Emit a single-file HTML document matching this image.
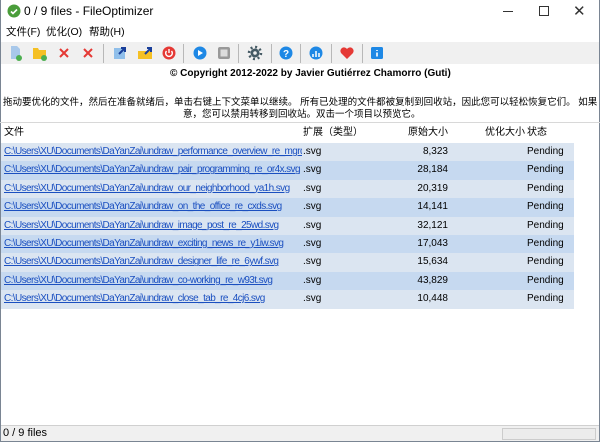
<!DOCTYPE html>
<html><head><meta charset="utf-8"><style>
*{margin:0;padding:0;box-sizing:border-box}
body{width:600px;height:442px;overflow:hidden;background:#fff;font-family:"Liberation Sans","Noto Sans CJK SC",sans-serif;font-size:11px;color:#000;position:relative}
.win{position:absolute;inset:0;border:1px solid #7a8593;border-top:none}
.abs{position:absolute;white-space:nowrap}
.tb{position:absolute;left:1px;right:1px;top:42px;height:22px;background:#f0f0f0}
.sep{position:absolute;top:44px;width:1px;height:19px;background:#b8b8b8}
.row{position:absolute;left:1px;width:573px;height:18.4px;font-size:10px;line-height:18px}
.row span{position:absolute;white-space:nowrap}
.a{left:3px;color:#1a4fc0;text-decoration:underline;letter-spacing:-0.6px;width:298px;overflow:hidden}
.e{left:302px}.o{right:126px}.s{left:526px}
.p{position:absolute;left:3px;width:594px;font-size:9.5px;white-space:nowrap;overflow:hidden;text-align:justify;text-align-last:justify}
</style></head><body>
<div class="win"></div>
<svg class="abs" style="left:7px;top:4px" width="14" height="14"><circle cx="7" cy="7" r="6.5" fill="#4a9d3a"/><path d="M4 7.5l2 2 4-4" stroke="#fff" stroke-width="1.6" fill="none"/></svg>
<div class="abs" style="left:24px;top:4px;font-size:12px">0 / 9 files - FileOptimizer</div>
<div class="abs" style="left:503px;top:11px;width:10px;height:1px;background:#333"></div>
<div class="abs" style="left:539px;top:6px;width:10px;height:10px;border:1px solid #333"></div>
<div class="abs" style="left:573px;top:2px;font-size:15px;color:#333">✕</div>
<div class="abs" style="left:6px;top:24px;font-size:10.5px">文件(F)</div>
<div class="abs" style="left:46px;top:24px;font-size:10.5px">优化(O)</div>
<div class="abs" style="left:89px;top:24px;font-size:10.5px">帮助(H)</div>
<div class="tb"></div>
<div class="sep" style="left:103px"></div><div class="sep" style="left:183px"></div><div class="sep" style="left:238px"></div><div class="sep" style="left:271px"></div><div class="sep" style="left:300px"></div><div class="sep" style="left:331px"></div><div class="sep" style="left:362px"></div>
<svg class="abs" style="left:0;top:42px" width="400" height="22">
<path d="M11 4h6l3 3v10h-9z" fill="#a8c8ea"/><circle cx="19" cy="16" r="3" fill="#4caf50"/>
<path d="M33 6h5l1 2h7v9h-13z" fill="#f5c024"/><circle cx="44" cy="16" r="3" fill="#4caf50"/>
<path d="M60 7l8 8M68 7l-8 8" stroke="#e53935" stroke-width="2"/>
<path d="M84 7l8 8M92 7l-8 8" stroke="#e53935" stroke-width="2"/>
<rect x="114" y="6" width="11" height="11" fill="#90bfea"/><path d="M119 12l6-6M121 6h4v4" stroke="#1a3f9a" stroke-width="2" fill="none"/>
<path d="M138 9h14v8h-14z" fill="#f5c024"/><path d="M145 12l6-6M147 6h4v4" stroke="#1a3f9a" stroke-width="2" fill="none"/>
<circle cx="169" cy="11" r="6.5" fill="#e53935"/><path d="M169 7v4M166.5 9a3.3 3.3 0 1 0 5 0" stroke="#fff" stroke-width="1.4" fill="none"/>
<circle cx="200" cy="11" r="6.5" fill="#1e88e5"/><path d="M198 8v6l5-3z" fill="#fff"/>
<rect x="218" y="5" width="12" height="12" rx="2" fill="#999"/><rect x="220.5" y="7.5" width="7" height="7" fill="#ddd"/>
<circle cx="255" cy="11" r="4.5" fill="#455a64"/><circle cx="255" cy="11" r="6" fill="none" stroke="#455a64" stroke-width="2.5" stroke-dasharray="2 2.7"/><circle cx="255" cy="11" r="1.8" fill="#f0f0f0"/>
<circle cx="286" cy="11" r="6.5" fill="#1e88e5"/><text x="283" y="15" fill="#fff" font-size="10" font-weight="bold" font-family="Liberation Sans">?</text>
<circle cx="316" cy="11" r="6.5" fill="#1e88e5"/><path d="M313 12v3M316 9v6M319 11v4" stroke="#fff" stroke-width="1.5"/>
<path d="M347 17l-6-6a3.2 3.2 0 0 1 6-4a3.2 3.2 0 0 1 6 4z" fill="#e53935"/>
<rect x="371" y="5" width="12" height="12" rx="1.5" fill="#1e88e5"/><path d="M377 8v1M377 10.5v4" stroke="#fff" stroke-width="1.6"/>
</svg>
<div class="abs" style="left:170px;top:68px;font-size:10px;font-weight:bold">© Copyright 2012-2022 by Javier Gutiérrez Chamorro (Guti)</div>
<div class="p" style="top:94px">拖动要优化的文件，然后在准备就绪后，单击右键上下文菜单以继续。 所有已处理的文件都被复制到回收站，因此您可以轻松恢复它们。 如果您愿</div>
<div class="abs" style="left:183px;top:106px;font-size:9.5px">意，您可以禁用转移到回收站。双击一个项目以预览它。</div>
<div class="abs" style="left:0;top:122px;width:600px;height:1px;background:#d8d8d8"></div>
<div class="row" style="top:124px;line-height:18px;font-size:10px"><span style="left:3px">文件</span><span style="left:302px">扩展（类型）</span><span style="right:126px">原始大小</span><span style="left:484px">优化大小</span><span style="left:526px">状态</span></div>
<div class="row" style="top:143px;background:#dbe5f1"><span class="a">C:\Users\XU\Documents\DaYanZai\undraw_performance_overview_re_mgrq.svg</span><span class="e">.svg</span><span class="o">8,323</span><span class="s">Pending</span></div>
<div class="row" style="top:161.4px;background:#c6d9f0"><span class="a">C:\Users\XU\Documents\DaYanZai\undraw_pair_programming_re_or4x.svg</span><span class="e">.svg</span><span class="o">28,184</span><span class="s">Pending</span></div>
<div class="row" style="top:179.8px;background:#dbe5f1"><span class="a">C:\Users\XU\Documents\DaYanZai\undraw_our_neighborhood_ya1h.svg</span><span class="e">.svg</span><span class="o">20,319</span><span class="s">Pending</span></div>
<div class="row" style="top:198.2px;background:#c6d9f0"><span class="a">C:\Users\XU\Documents\DaYanZai\undraw_on_the_office_re_cxds.svg</span><span class="e">.svg</span><span class="o">14,141</span><span class="s">Pending</span></div>
<div class="row" style="top:216.6px;background:#dbe5f1"><span class="a">C:\Users\XU\Documents\DaYanZai\undraw_image_post_re_25wd.svg</span><span class="e">.svg</span><span class="o">32,121</span><span class="s">Pending</span></div>
<div class="row" style="top:235px;background:#c6d9f0"><span class="a">C:\Users\XU\Documents\DaYanZai\undraw_exciting_news_re_y1iw.svg</span><span class="e">.svg</span><span class="o">17,043</span><span class="s">Pending</span></div>
<div class="row" style="top:253.4px;background:#dbe5f1"><span class="a">C:\Users\XU\Documents\DaYanZai\undraw_designer_life_re_6ywf.svg</span><span class="e">.svg</span><span class="o">15,634</span><span class="s">Pending</span></div>
<div class="row" style="top:271.8px;background:#c6d9f0"><span class="a">C:\Users\XU\Documents\DaYanZai\undraw_co-working_re_w93t.svg</span><span class="e">.svg</span><span class="o">43,829</span><span class="s">Pending</span></div>
<div class="row" style="top:290.2px;background:#dbe5f1"><span class="a">C:\Users\XU\Documents\DaYanZai\undraw_close_tab_re_4cj6.svg</span><span class="e">.svg</span><span class="o">10,448</span><span class="s">Pending</span></div>
<div class="abs" style="left:1px;right:1px;top:425px;height:16px;background:#f0f0f0;border-top:1px solid #d0d0d0"></div>
<div class="abs" style="left:502px;top:428px;width:94px;height:12px;border:1px solid #ccc;background:#ececec"></div>
<div class="abs" style="left:3px;top:427px;font-size:11px">0 / 9 files</div>
</body></html>
